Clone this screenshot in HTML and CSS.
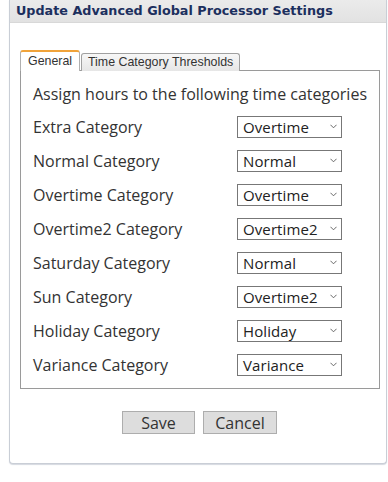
FILE: index.html
```html
<!DOCTYPE html>
<html>
<head>
<meta charset="utf-8">
<link rel="stylesheet" href="styles.css">
</head>
<body>
<div class="panel">
  <div class="titlebar">Update Advanced Global Processor Settings</div>
  <div class="panel-body">
    <div class="tabs">
      <div class="tab active">General</div>
      <div class="tab">Time Category Thresholds</div>
    </div>
    <div class="tab-content">
      <div class="intro">Assign hours to the following time categories</div>
      <div class="grid">
        <label class="lbl">Extra Category</label>
        <div class="sel"><span>Overtime</span><svg viewBox="0 0 8 5" class="chev"><path d="M0.5 0.5 L4 4 L7.5 0.5" /></svg></div>
        <label class="lbl">Normal Category</label>
        <div class="sel"><span>Normal</span><svg viewBox="0 0 8 5" class="chev"><path d="M0.5 0.5 L4 4 L7.5 0.5" /></svg></div>
        <label class="lbl">Overtime Category</label>
        <div class="sel"><span>Overtime</span><svg viewBox="0 0 8 5" class="chev"><path d="M0.5 0.5 L4 4 L7.5 0.5" /></svg></div>
        <label class="lbl">Overtime2 Category</label>
        <div class="sel"><span>Overtime2</span><svg viewBox="0 0 8 5" class="chev"><path d="M0.5 0.5 L4 4 L7.5 0.5" /></svg></div>
        <label class="lbl">Saturday Category</label>
        <div class="sel"><span>Normal</span><svg viewBox="0 0 8 5" class="chev"><path d="M0.5 0.5 L4 4 L7.5 0.5" /></svg></div>
        <label class="lbl">Sun Category</label>
        <div class="sel"><span>Overtime2</span><svg viewBox="0 0 8 5" class="chev"><path d="M0.5 0.5 L4 4 L7.5 0.5" /></svg></div>
        <label class="lbl">Holiday Category</label>
        <div class="sel"><span>Holiday</span><svg viewBox="0 0 8 5" class="chev"><path d="M0.5 0.5 L4 4 L7.5 0.5" /></svg></div>
        <label class="lbl">Variance Category</label>
        <div class="sel"><span>Variance</span><svg viewBox="0 0 8 5" class="chev"><path d="M0.5 0.5 L4 4 L7.5 0.5" /></svg></div>
      </div>
    </div>
    <div class="buttons">
      <button class="btn btn-save">Save</button>
      <button class="btn btn-cancel">Cancel</button>
    </div>
  </div>
</div>
</body>
</html>
```
FILE: styles.css
```css
html, body {
  margin: 0;
  padding: 0;
  background: #ffffff;
}
body {
  width: 388px;
  height: 482px;
  overflow: hidden;
}
.panel {
  margin-left: 9px;
  width: 376px;
  border: 1px solid #c9ced6;
  border-top: none;
  border-radius: 0 0 4px 4px;
  box-shadow: 0 1px 1px #d5d9e0;
  background: #fff;
}
.titlebar {
  height: 23px;
  box-sizing: border-box;
  padding: 3px 0 0 6px;
  background: linear-gradient(#ebebeb, #e2e2e2);
  border-bottom: 1px solid #d8d8d8;
  font-family: "DejaVu Sans", Verdana, sans-serif;
  font-weight: bold;
  font-size: 12.75px;
  line-height: 16px;
  color: #1c2f5e;
  white-space: nowrap;
}
.panel-body {
  padding: 27px 6px 29px 10px;
}
.tabs {
  display: flex;
  align-items: flex-end;
  height: 21px;
  position: relative;
  z-index: 1;
  margin-bottom: -1px;
}
.tab {
  font-family: "Liberation Sans", Arial, sans-serif;
  font-size: 12.4px;
  color: #333;
  box-sizing: border-box;
  height: 18px;
  line-height: 16px;
  padding: 0 6px 0 6px;
  border: 1px solid #a0a0a0;
  border-bottom: none;
  border-radius: 3px 3px 0 0;
  background: linear-gradient(#f7f7f7, #e6e6e6);
  margin-left: 1px;
  white-space: nowrap;
}
.tab.active {
  margin-left: 0;
  height: 21px;
  line-height: 18px;
  background: #fff;
  border-color: #b0b0b0;
  border-top: 2px solid #f0a33a;
  padding: 0 6px 0 7px;
  width: 60px;
}
.tab-content {
  width: 360px;
  box-sizing: border-box;
  border: 1px solid #9a9a9a;
  padding: 13px 12px 12px 12px;
  font-family: "Open Sans", "Segoe UI", sans-serif;
  font-size: 16px;
  color: #333;
}
.intro {
  line-height: 20px;
  margin-bottom: 11px;
  white-space: nowrap;
}
.grid {
  display: grid;
  grid-template-columns: 204px 105px;
  grid-auto-rows: 23px;
  row-gap: 11px;
  align-items: center;
}
.lbl {
  white-space: nowrap;
}
.sel {
  box-sizing: border-box;
  height: 22px;
  border: 1px solid #777;
  display: flex;
  align-items: center;
  justify-content: space-between;
  padding: 0 4px 0 5px;
  color: #222;
  background: #fff;
  white-space: nowrap;
  font-size: 15px;
  letter-spacing: 0.1px;
}
.chev {
  flex: none;
  width: 7px;
  height: 5px;
  fill: none;
  stroke: #555;
  stroke-width: 1;
}
.buttons {
  display: flex;
  justify-content: center;
  gap: 8px;
  margin-top: 22px;
  padding-right: 1px;
}
.btn {
  font-family: "Open Sans", "Segoe UI", sans-serif;
  font-size: 16px;
  color: #333;
  height: 23px;
  box-sizing: border-box;
  border: 1px solid #adadad;
  background: #dddddd;
  padding: 0;
  line-height: 20px;
}
.btn-save { width: 73px; }
.btn-cancel { width: 74px; }
```
